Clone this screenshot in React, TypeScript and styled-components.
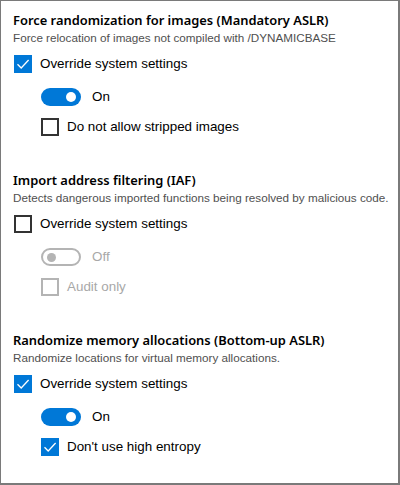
import React from "react";
import styled, { createGlobalStyle } from "styled-components";

const Global = createGlobalStyle`
  html, body { margin: 0; padding: 0; background: #fff; }
  * { box-sizing: border-box; }
`;

const Frame = styled.div`
  width: 400px;
  height: 485px;
  border-top: 1px solid #7a7a7a;
  border-left: 1px solid #7a7a7a;
  border-right: 2px solid #7a7a7a;
  border-bottom: 2px solid #7a7a7a;
  font-family: "Liberation Sans", Arial, sans-serif;
  color: #000;
  display: flex;
  flex-direction: column;
`;

const Section = styled.section`
  height: 160px;
  flex-shrink: 0;
  padding: 9px 0 0 12px;
  display: flex;
  flex-direction: column;
`;

const Title = styled.div`
  font-family: "Noto Sans", "Open Sans", sans-serif;
  font-size: 12.9px;
  font-weight: 600;
  line-height: 20px;
  white-space: nowrap;
`;

const Desc = styled.div`
  font-size: 11.7px;
  line-height: 15px;
  color: #505050;
  white-space: nowrap;
`;

const Row = styled.div<{ $indent?: number; $top: number }>`
  display: flex;
  align-items: center;
  height: 18px;
  margin-top: ${(p) => p.$top}px;
  padding-left: ${(p) => p.$indent ?? 1}px;
`;

const Box = styled.span<{ $checked?: boolean; $disabled?: boolean }>`
  width: 18px;
  height: 18px;
  flex-shrink: 0;
  display: flex;
  align-items: center;
  justify-content: center;
  background: ${(p) => (p.$checked ? "#0078d7" : "#fff")};
  border: ${(p) =>
    p.$checked ? "none" : `2px solid ${p.$disabled ? "#b4b4b4" : "#333"}`};
`;

const Label = styled.span<{ $disabled?: boolean; $gap?: number }>`
  margin-left: ${(p) => p.$gap ?? 8}px;
  font-size: 13.4px;
  line-height: 18px;
  color: ${(p) => (p.$disabled ? "#a8a8a8" : "#000")};
  white-space: nowrap;
`;

const Track = styled.span<{ $on?: boolean }>`
  width: 40px;
  height: 18px;
  flex-shrink: 0;
  border-radius: 9px;
  display: flex;
  align-items: center;
  justify-content: ${(p) => (p.$on ? "flex-end" : "flex-start")};
  padding: 0 5px;
  background: ${(p) => (p.$on ? "#0078d7" : "#fff")};
  border: ${(p) => (p.$on ? "none" : "2px solid #b4b4b4")};
`;

const Knob = styled.span<{ $on?: boolean }>`
  width: ${(p) => (p.$on ? 10 : 9)}px;
  height: ${(p) => (p.$on ? 10 : 9)}px;
  border-radius: 50%;
  background: ${(p) => (p.$on ? "#fff" : "#b4b4b4")};
  margin-left: ${(p) => (p.$on ? 0 : -1)}px;
`;

const Check = () => (
  <svg width="14" height="14" viewBox="0 0 14 14">
    <path d="M1.5 7.2 L5.2 11 L12.6 3" fill="none" stroke="#fff" strokeWidth="1.3" />
  </svg>
);

function CheckRow(props: {
  checked?: boolean;
  disabled?: boolean;
  label: string;
  indent?: number;
  top: number;
}) {
  return (
    <Row $indent={props.indent} $top={props.top}>
      <Box $checked={props.checked} $disabled={props.disabled}>
        {props.checked && <Check />}
      </Box>
      <Label $disabled={props.disabled}>{props.label}</Label>
    </Row>
  );
}

function ToggleRow(props: { on?: boolean; top: number }) {
  return (
    <Row $indent={28} $top={props.top}>
      <Track $on={props.on}>
        <Knob $on={props.on} />
      </Track>
      <Label $gap={11} $disabled={!props.on}>
        {props.on ? "On" : "Off"}
      </Label>
    </Row>
  );
}

type Cfg = {
  title: string;
  desc: string;
  override: boolean;
  on: boolean;
  sub: string;
  subChecked: boolean;
};

const sections: Cfg[] = [
  {
    title: "Force randomization for images (Mandatory ASLR)",
    desc: "Force relocation of images not compiled with /DYNAMICBASE",
    override: true,
    on: true,
    sub: "Do not allow stripped images",
    subChecked: false,
  },
  {
    title: "Import address filtering (IAF)",
    desc: "Detects dangerous imported functions being resolved by malicious code.",
    override: false,
    on: false,
    sub: "Audit only",
    subChecked: false,
  },
  {
    title: "Randomize memory allocations (Bottom-up ASLR)",
    desc: "Randomize locations for virtual memory allocations.",
    override: true,
    on: true,
    sub: "Don't use high entropy",
    subChecked: true,
  },
];

export default function App() {
  return (
    <>
      <Global />
      <Frame>
        {sections.map((s) => (
          <Section key={s.title}>
            <Title>{s.title}</Title>
            <Desc>{s.desc}</Desc>
            <CheckRow checked={s.override} label="Override system settings" top={10} />
            <ToggleRow on={s.on} top={15} />
            <CheckRow
              checked={s.subChecked}
              disabled={!s.override}
              label={s.sub}
              indent={28}
              top={12}
            />
          </Section>
        ))}
      </Frame>
    </>
  );
}
